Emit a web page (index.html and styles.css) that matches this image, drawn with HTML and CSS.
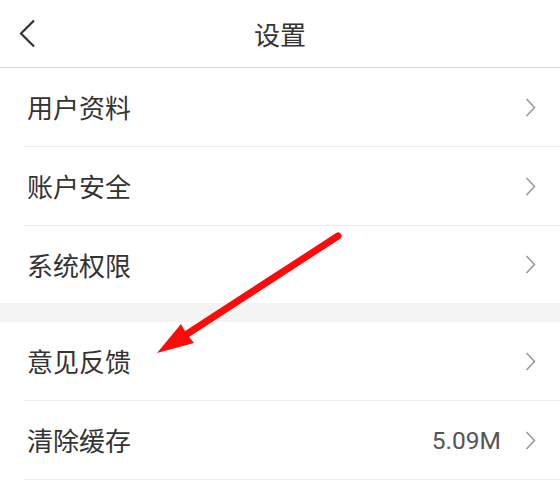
FILE: index.html
```html
<!DOCTYPE html>
<html lang="zh">
<head>
<meta charset="utf-8">
<title>设置</title>
<link rel="stylesheet" href="styles.css">
</head>
<body>
<div class="page">
  <header class="topbar">
    <span class="back">
      <svg width="16" height="30" viewBox="0 0 16 30"><polyline points="15,1.5 2,14.5 15,27.5" fill="none" stroke="#333" stroke-width="2.2" stroke-linejoin="miter"/></svg>
    </span>
    <h1 class="title">设置</h1>
    <span></span>
  </header>
  <section class="group group-a">
    <div class="row"><span class="label">用户资料</span><span class="chev"><svg width="11" height="19" viewBox="0 0 11 19"><polyline points="1.5,1 9.5,9.5 1.5,18" fill="none" stroke="#9a9a9a" stroke-width="1.6"/></svg></span></div>
    <div class="row"><span class="label">账户安全</span><span class="chev"><svg width="11" height="19" viewBox="0 0 11 19"><polyline points="1.5,1 9.5,9.5 1.5,18" fill="none" stroke="#9a9a9a" stroke-width="1.6"/></svg></span></div>
    <div class="row"><span class="label">系统权限</span><span class="chev"><svg width="11" height="19" viewBox="0 0 11 19"><polyline points="1.5,1 9.5,9.5 1.5,18" fill="none" stroke="#9a9a9a" stroke-width="1.6"/></svg></span></div>
  </section>
  <div class="spacer"></div>
  <section class="group group-b">
    <div class="row"><span class="label">意见反馈</span><span class="chev"><svg width="11" height="19" viewBox="0 0 11 19"><polyline points="1.5,1 9.5,9.5 1.5,18" fill="none" stroke="#9a9a9a" stroke-width="1.6"/></svg></span></div>
    <div class="row"><span class="label">清除缓存</span><span class="value">5.09M</span><span class="chev"><svg width="11" height="19" viewBox="0 0 11 19"><polyline points="1.5,1 9.5,9.5 1.5,18" fill="none" stroke="#9a9a9a" stroke-width="1.6"/></svg></span></div>
  </section>
  <svg class="annot" width="560" height="489" viewBox="0 0 560 489">
    <line x1="338" y1="236" x2="184" y2="336" stroke="#ff0a0a" stroke-width="7" stroke-linecap="round"/>
    <polygon points="157,353 181,324 186,333 194,343" fill="#ff0a0a"/>
  </svg>
</div>
</body>
</html>
```
FILE: styles.css
```css
html, body {
  margin: 0;
  padding: 0;
  background: #ffffff;
}
body {
  font-family: "Noto Sans CJK SC", "Noto Sans", sans-serif;
  color: #333333;
}
.page {
  position: relative;
  width: 560px;
  height: 489px;
  overflow: hidden;
}
.topbar {
  height: 67px;
  border-bottom: 1px solid #d8d8d8;
  display: grid;
  grid-template-columns: 1fr auto 1fr;
  align-items: center;
}
.back {
  display: flex;
  align-items: center;
  padding-left: 19px;
  padding-top: 1px;
}
.back svg { display: block; }
.title {
  margin: 0;
  font-size: 26px;
  font-weight: 400;
  color: #333333;
  line-height: 1;
  padding-top: 1px;
}
.group { background: #ffffff; }
.row {
  margin-left: 24px;
  padding: 0 24px 0 3px;
  height: 78px;
  display: flex;
  align-items: center;
  border-bottom: 1px solid #ececec;
}
.group-a .row:last-child {
  border-bottom: none;
  height: 77px;
}
.label {
  flex: 1;
  font-size: 26px;
  line-height: 1;
  color: #333333;
}
.value {
  font-family: Roboto, "Noto Sans", sans-serif;
  font-size: 24.5px;
  color: #555555;
  margin-right: 24px;
}
.chev { display: flex; align-items: center; }
.chev svg { display: block; }
.spacer {
  height: 19px;
  background: #f4f4f4;
}
.annot {
  position: absolute;
  left: 0;
  top: 0;
  pointer-events: none;
}
```
